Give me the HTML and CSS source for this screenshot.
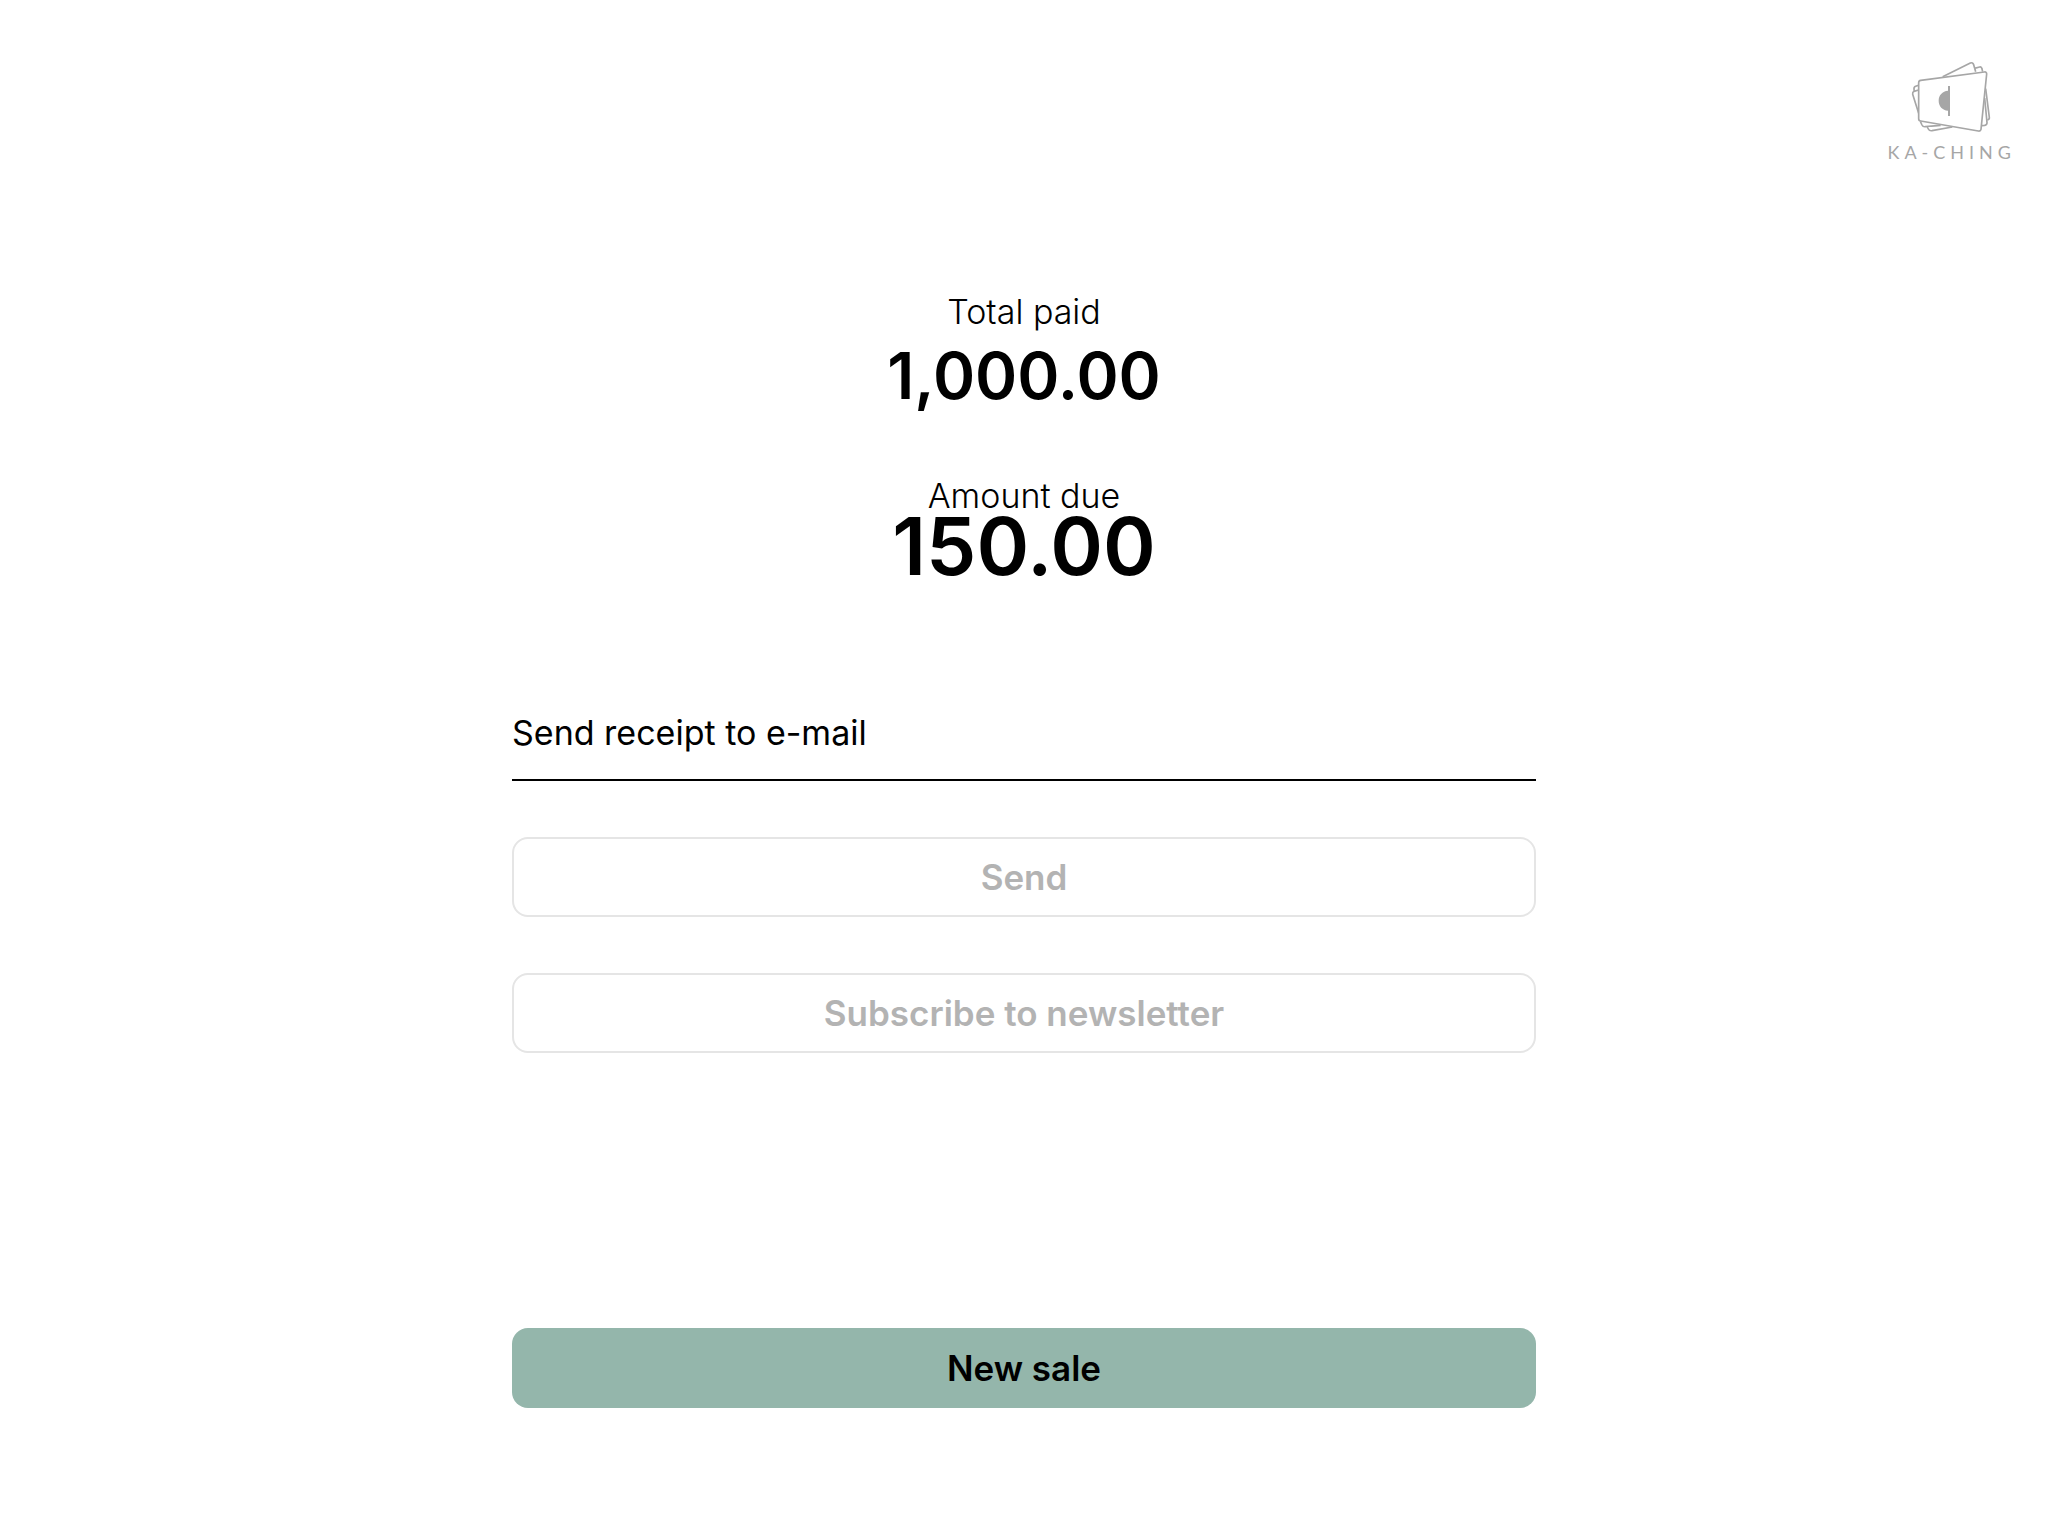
FILE: index.html
```
<!DOCTYPE html>
<html lang="en">
<head>
    <meta charset="UTF-8">
    <meta name="viewport" content="width=device-width, initial-scale=1.0">
    <title>Ka-ching</title>
    <link rel="stylesheet" href="styles.css">
</head>
<body>
    <header>
        <div class="brand">
            <svg class="brand-icon" viewBox="120 60 252 222" aria-hidden="true">
                <!-- cards at the back -->
                <path d="M218 110 L301 69 Q308 66 311 74 L317 95"/>
                <path d="M313 85 L329 81 Q335 80 336 87 L338 95"/>
                <path d="M347 146 L358 232 Q359 238 352 240"/>
                <path d="M344 174 L351 248 Q351 254 344 256 L335 257"/>
                <path d="M146 136 L137 139 Q131 141 132 148 L133 153"/>
                <path d="M146 150 L132 154 Q127 156 128 163 L146 220"/>
                <path d="M151 244 L156 255 Q159 261 166 260 L212 256"/>
                <path d="M172 261 L175 267 Q178 273 186 272 L247 261"/>
                <!-- front card -->
                <path d="M152 121 L343 96 Q350 95 350 102 L333 268 Q332 274 325 273 L152 243 Q146 242 146 236 L146 128 Q146 122 152 121 Z"/>
                <path class="solid" d="M234 138 H240 V228 H234 V212 C217 211 206 198 206 182 C206 166 217 153 234 152 Z"/>
            </svg>
            <span class="brand-name">KA-CHING</span>
        </div>
    </header>
    <main>
        <section class="totals">
            <p class="label">Total paid</p>
            <p class="paid">1,000.00</p>
            <p class="label label-due">Amount due</p>
            <p class="due">150.00</p>
        </section>
        <form class="receipt">
            <input type="email" class="email" placeholder="Send receipt to e-mail" aria-label="Send receipt to e-mail">
            <button type="submit" class="btn" disabled>Send</button>
            <button type="button" class="btn" disabled>Subscribe to newsletter</button>
        </form>
        <button type="button" class="btn btn-primary">New sale</button>
    </main>
</body>
</html>
```
FILE: styles.css
```
* {
    box-sizing: border-box;
}
body {
    font-family: Inter, sans-serif;
    font-size: 34px;
    line-height: 44px;
    margin: 0;
    min-height: 100vh;
    display: flex;
    flex-direction: column;
    background-color: #fff;
    color: #000;
}
header {
    display: flex;
    justify-content: flex-end;
    padding: 60px 32px 0;
}
.brand {
    display: flex;
    flex-direction: column;
    align-items: center;
    gap: 8px;
    color: #a6a6a6;
}
.brand-icon {
    width: 84px;
    height: 74px;
    fill: #fff;
    stroke: currentColor;
    stroke-width: 5;
    stroke-linejoin: round;
}
.brand-icon .solid {
    fill: currentColor;
    stroke: none;
}
.brand-name {
    font-family: Lato, sans-serif;
    font-size: 18px;
    line-height: 20px;
    letter-spacing: 5px;
}
main {
    flex: 1;
    width: 50%;
    margin: 0 auto;
    padding: 128px 0;
    display: flex;
    flex-direction: column;
}
.totals {
    text-align: center;
}
.totals p {
    margin: 0;
}
.label {
    font-weight: 300;
}
.paid,
.due {
    font-weight: 600;
}
.paid {
    font-size: 64px;
    line-height: 84px;
}
.totals .label-due {
    margin-top: 56px;
}
.due {
    font-size: 80px;
    line-height: 56px;
}

/* Receipt form */
.receipt {
    display: flex;
    flex-direction: column;
    gap: 56px;
    margin-top: 136px;
}
.email {
    width: 100%;
    height: 71px;
    padding: 0 0 25px;
    border: none;
    border-bottom: 2px solid #000;
    border-radius: 0;
    background: none;
    font: inherit;
    color: inherit;
    outline: none;
}
.email::placeholder {
    color: #000;
    opacity: 1;
}
.btn {
    width: 100%;
    height: 80px;
    border: 2px solid #e5e5e5;
    border-radius: 16px;
    background-color: #fff;
    color: #000;
    font: inherit;
    font-size: 35px;
    font-weight: 600;
    cursor: pointer;
}
.btn:disabled {
    color: #b3b3b3;
    cursor: default;
}
.btn-primary {
    margin-top: auto;
    border: none;
    background-color: #94b6ab;
}
```
